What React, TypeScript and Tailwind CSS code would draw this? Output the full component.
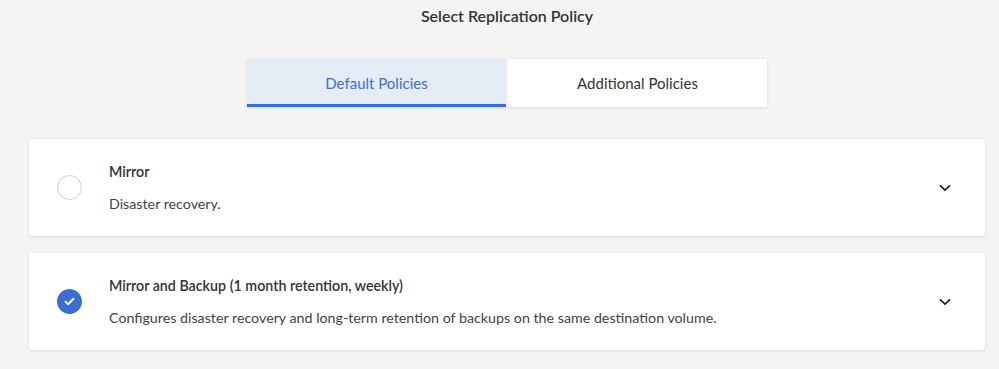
import { useState } from "react";

const policies = [
  { id: "mirror", title: "Mirror", desc: "Disaster recovery." },
  {
    id: "mirror-backup",
    title: "Mirror and Backup (1 month retention, weekly)",
    desc: "Configures disaster recovery and long-term retention of backups on the same destination volume.",
  },
];

function Chevron() {
  return (
    <svg width="12" height="8" viewBox="0 0 12 8" fill="none">
      <path d="M1.5 1.8 6 6.2l4.5-4.4" stroke="#222" strokeWidth="1.7" strokeLinecap="round" strokeLinejoin="round" />
    </svg>
  );
}

export default function App() {
  const [tab, setTab] = useState("default");
  const [selected, setSelected] = useState("mirror-backup");

  return (
    <div className="min-h-[369px] bg-[#f4f4f4] text-[#333] pt-[5px] pl-[15px]" style={{ fontFamily: 'Lato, "Open Sans", sans-serif' }}>
      <h2 className="text-center text-[16px] font-semibold leading-[22px] text-[#333]">Select Replication Policy</h2>

      <div className="flex justify-center mt-[32px]">
        <div className="flex gap-[2px] shadow-[0_1px_3px_rgba(0,0,0,0.12)]">
          <button
            onClick={() => setTab("default")}
            className={`w-[259px] h-[48px] text-[15px] border-b-[3px] pt-[3px] ${tab === "default" ? "bg-[#e6ecf5] text-[#3b6ed0] border-[#3b6ed0]" : "bg-white text-[#333] border-transparent"}`}
          >
            Default Policies
          </button>
          <button
            onClick={() => setTab("additional")}
            className={`w-[259px] h-[48px] text-[15px] border-b-[3px] pt-[3px] ${tab === "additional" ? "bg-[#e6ecf5] text-[#3b6ed0] border-[#3b6ed0]" : "bg-white text-[#333] border-transparent"}`}
          >
            Additional Policies
          </button>
        </div>
      </div>

      <div className="mx-auto w-[956px] mt-[32px] flex flex-col gap-[17px]">
        {policies.map(p => (
          <div
            key={p.id}
            onClick={() => setSelected(p.id)}
            className="h-[97px] bg-white rounded-[3px] shadow-[0_1px_3px_rgba(0,0,0,0.12)] flex items-center pl-[28px] pr-[34px] cursor-pointer"
          >
            {selected === p.id ? (
              <div className="w-[25px] h-[25px] rounded-full bg-[#3b6ed0] flex items-center justify-center">
                <svg width="11" height="9" viewBox="0 0 11 9" fill="none">
                  <path d="M1.5 4.6 4.2 7.2 9.5 1.8" stroke="white" strokeWidth="2" strokeLinecap="round" strokeLinejoin="round" />
                </svg>
              </div>
            ) : (
              <div className="w-[25px] h-[25px] rounded-full border border-[#cfcfcf] bg-white" />
            )}
            <div className="ml-[27px] flex-1">
              <div className="text-[14.25px] font-semibold leading-[20px] text-[#333]">{p.title}</div>
              <div className="text-[14.25px] leading-[20px] text-[#444] mt-[12px]">{p.desc}</div>
            </div>
            <Chevron />
          </div>
        ))}
      </div>
    </div>
  );
}
